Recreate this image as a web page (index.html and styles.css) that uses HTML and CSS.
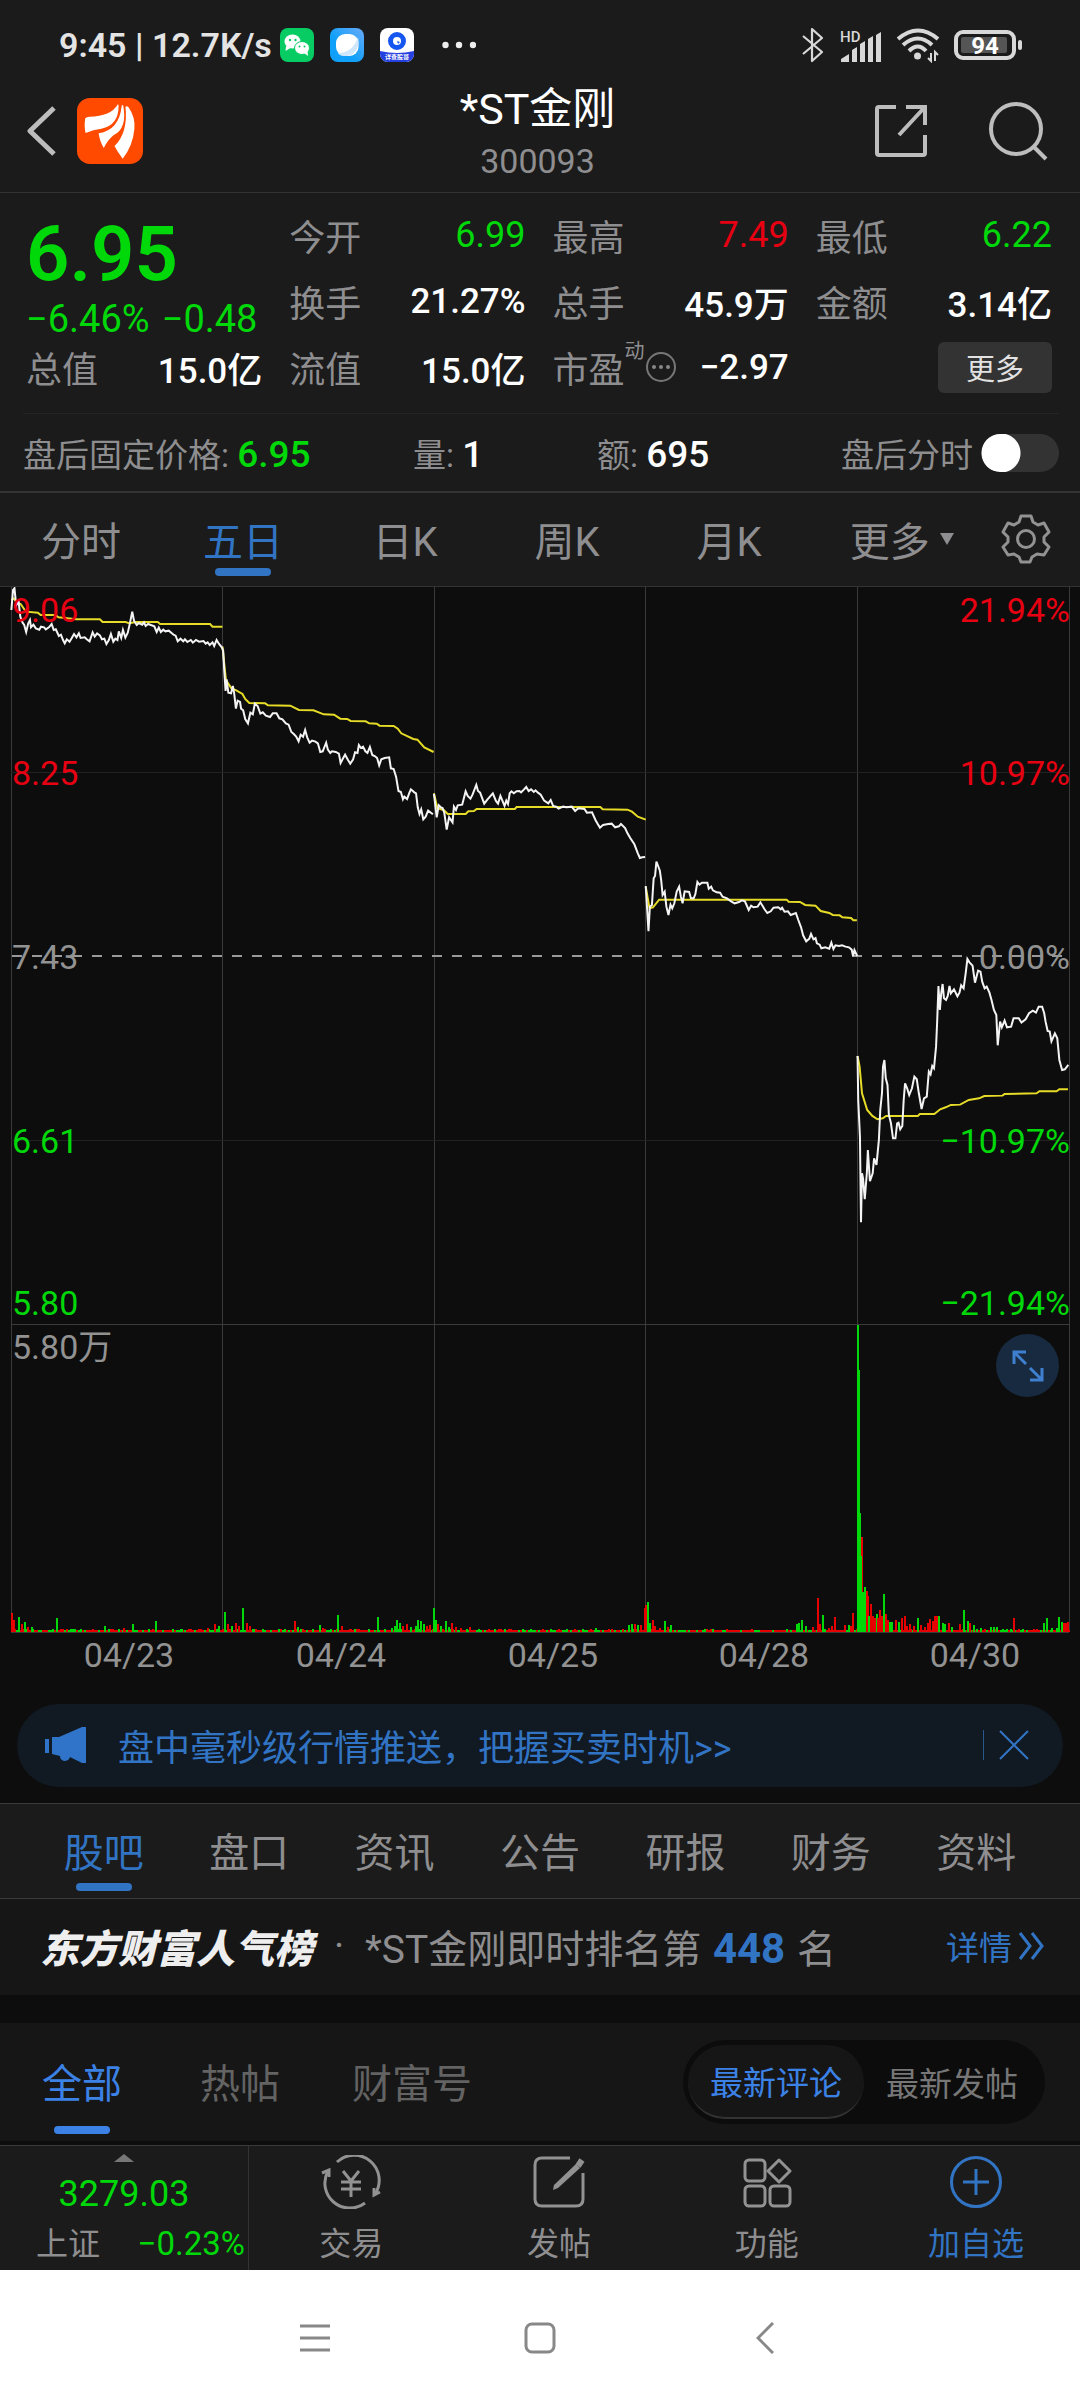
FILE: index.html
```html
<!DOCTYPE html>
<html lang="zh-CN">
<head>
<meta charset="utf-8">
<meta name="viewport" content="width=device-width, initial-scale=1">
<title>*ST金刚 300093</title>
<link rel="stylesheet" href="styles.css">
</head>
<body>
<div class="app">
  <div class="status">
    <span class="status-text">9:45 | 12.7K/s</span>
    <span class="status-apps">
      <svg width="34" height="34" viewBox="0 0 34 34"><rect width="34" height="34" rx="8" fill="#07cc63"/><g fill="#fff"><ellipse cx="12.500" cy="13.500" rx="8" ry="7"/><path d="M6 18l-.5 5 5-3z"/><g stroke="#07cc63"><ellipse cx="22" cy="20" rx="7.500" ry="6.500"/></g><path d="M24 25l4 3-.5-5z"/></g><g fill="#07cc63"><circle cx="10" cy="12" r="1.200"/><circle cx="15.500" cy="12" r="1.200"/><circle cx="19.500" cy="18.500" r="1"/><circle cx="24.500" cy="18.500" r="1"/></g></svg>
      <svg width="34" height="34" viewBox="0 0 34 34"><defs><linearGradient id="sky" x1="1" y1="0" x2="0" y2="1"><stop offset=".1" stop-color="#5aa8f8"/><stop offset=".6" stop-color="#10a0fa"/></linearGradient></defs><rect width="34" height="34" rx="8" fill="url(#sky)"/><rect x="6" y="6" width="22.500" height="22" rx="9" fill="#fff"/><path d="M28 9c2 9-2 19-13 19-4 0-6-1-7-3 10 0 17-6 20-16z" fill="#cfe6fb"/></svg>
      <svg width="34" height="34" viewBox="0 0 34 34"><defs><clipPath id="round"><rect width="34" height="34" rx="8"/></clipPath></defs><g clip-path="url(#round)"><rect width="34" height="34" fill="#fff"/><path d="M0 23q17 4 34 0v11H0z" fill="#2740e0"/></g><circle cx="17" cy="13" r="6.500" fill="none" stroke="#1656f0" stroke-width="5"/><path d="M17 13l3 1-2 2z" fill="#1656f0"/><text x="17" y="31" class="app-label">详查股哥</text></svg>
    </span>
    <svg class="status-dots" width="34" height="8" viewBox="0 0 34 8" fill="#eee"><circle cx="3.500" cy="4" r="3.200"/><circle cx="17" cy="4" r="3.200"/><circle cx="31" cy="4" r="3.200"/></svg>
    <span class="status-right">
      <svg width="22" height="36" viewBox="0 0 22 36" fill="none" stroke="#d8d8d8" stroke-width="2.200" stroke-linejoin="round"><path d="M1 9l19 16-10 9V2l10 9L1 27"/></svg>
      <svg width="44" height="38" viewBox="-2 -4 44 38" fill="#d8d8d8"><text x="0" y="12" class="hd">HD</text><path d="M1 32v-3l8-5v8zM12 32V20l5-3v15zM20 32V14l5-3v21zM28 32V9l5-3v26zM36 32V5l5-3v30z"/></svg>
      <svg width="44" height="36" viewBox="0 0 44 36" fill="none" stroke="#d8d8d8" stroke-width="4"><path d="M2 12Q22-5 42 12M7 18Q22 5 36 18M13 24Q22 15 30 24"/><circle cx="21.500" cy="29" r="3.500" fill="#d8d8d8" stroke="none"/><path d="M35 26v8l-3-3M39 34v-9l3 3" stroke-width="2"/></svg>
      <svg width="70" height="32" viewBox="0 0 70 32"><rect x="2" y="3" width="58" height="26" rx="7" fill="none" stroke="#d8d8d8" stroke-width="4"/><rect x="7" y="8" width="46" height="16" rx="2" fill="#555"/><rect x="64" y="11" width="4" height="10" rx="2" fill="#d8d8d8"/><text x="31" y="25" class="battery">94</text></svg>
    </span>
  </div>

  <header class="header">
    <div class="header-side">
      <button class="icon-button" aria-label="返回"><svg width="30" height="50" viewBox="0 0 30 50" fill="none" stroke="#bdbdbd" stroke-width="5" stroke-linejoin="round"><path d="M27 2L3 25l24 23"/></svg></button>
      <svg class="brand" viewBox="225 294 192 198" preserveAspectRatio="none"><rect x="225" y="294" width="192" height="198" rx="38" fill="#ff4a00"/><g fill="#fff"><path d="M249 355q4-5 12-5 62 0 83-37 2 0 2 5 0 58-50 68-24 3-46 13-5-20-1-44z"/><path d="M288 400q60-10 67-83l4-3q14 70-28 92-18 16-28 38-12-20-15-44z"/><path d="M334 438q40-40 32-118 4-4 9 2 20 30 17 64-4 50-34 90-14-18-24-38z"/></g></svg>
    </div>
    <div class="header-title"><h1>*ST金刚</h1><p>300093</p></div>
    <div class="header-side header-actions">
      <button class="icon-button" aria-label="分享"><svg width="54" height="54" viewBox="0 0 54 54" fill="none" stroke="#bdbdbd" stroke-width="4"><path d="M22 3H5q-2 0-2 2v44q0 2 2 2h44q2 0 2-2V31M32 3h19v18M50 4L25 31"/></svg></button>
      <button class="icon-button" aria-label="搜索"><svg width="60" height="60" viewBox="0 0 60 60" fill="none" stroke="#bdbdbd" stroke-width="4"><circle cx="28" cy="28" r="25"/><path d="M45 45l13 13"/></svg></button>
    </div>
  </header>

  <section class="quote">
    <div class="quote-grid">
      <div class="price down"><strong>6.95</strong><div class="change"><span>−6.46%</span><span>−0.48</span></div></div>
      <div class="stat"><span>今开</span><b class="down">6.99</b></div>
      <div class="stat"><span>最高</span><b class="up">7.49</b></div>
      <div class="stat"><span>最低</span><b class="down">6.22</b></div>
      <div class="stat"><span>换手</span><b>21.27%</b></div>
      <div class="stat"><span>总手</span><b>45.9万</b></div>
      <div class="stat"><span>金额</span><b>3.14亿</b></div>
      <div class="stat"><span>总值</span><b>15.0亿</b></div>
      <div class="stat"><span>流值</span><b>15.0亿</b></div>
      <div class="stat"><span class="pe">市盈<sup>动</sup><svg width="32" height="32" viewBox="0 0 32 32"><circle cx="16" cy="16" r="14" fill="none" stroke="#777" stroke-width="2"/><g fill="#888"><circle cx="9" cy="16" r="2"/><circle cx="16" cy="16" r="2"/><circle cx="23" cy="16" r="2"/></g></svg></span><b>−2.97</b></div>
      <div class="stat stat-more"><button class="more">更多</button></div>
    </div>
    <div class="after">
      <span>盘后固定价格: <b class="down">6.95</b></span>
      <span>量: <b>1</b></span>
      <span>额: <b>695</b></span>
      <label class="switch">盘后分时<input type="checkbox"></label>
    </div>
  </section>

  <nav class="periods">
    <button>分时</button>
    <button class="active">五日</button>
    <button>日K</button>
    <button>周K</button>
    <button>月K</button>
    <button class="period-more">更多<svg width="14" height="12" viewBox="0 0 14 12"><path d="M0 0h14L7 12z" fill="#8e8e90"/></svg></button>
    <button class="gear" aria-label="设置"><svg width="50" height="50" viewBox="0 0 50 50" fill="none" stroke="#929292" stroke-width="3" stroke-linejoin="round"><path d="M20 2h10l2 6 5 3 6-2 5 9-5 5v5l5 5-5 8-7-1-5 3-2 5H20l-2-5-5-3-6 1-5-8 5-5v-5l-5-5 5-9 6 2 5-3z"/><circle cx="25" cy="25" r="8.500"/></svg></button>
  </nav>

  <main class="chart">
    <svg class="plot" viewBox="0 0 1080 1100" role="img" aria-label="五日走势">
      <g class="grid">
        <path d="M11.500 0V1045M222.500 0V1045M434.500 0V1045M645.500 0V1045M857.500 0V1045M1069.500 0V1045M11 737.500H1069M11 1045.500H1069"/>
        <path class="faint" d="M11 185.500H1069M11 553.500H1069"/>
      </g>
      <path class="zero" d="M12 369H1069"/>
      <g class="lines" transform="translate(0 -7) scale(.3444 .3333)">
        <polyline class="average" points="33,60 40,55 50,68 60,72 75,95 110,98 118,105 160,105 170,112 222,118 290,118 298,126 365,126 375,130 395,126 458,126 465,132 610,132 617,140 646,140"/>
        <polyline class="average" points="646,200 656,300 672,325 686,331 704,342 712,357 724,369 770,370 778,376 843,377 868,390 910,391 940,403 970,404 988,416 1008,417 1018,423 1062,424 1072,430 1094,431 1102,437 1143,438 1155,446 1165,460 1200,477 1212,479 1232,502 1259,516"/>
        <polyline class="average" points="1260,640 1270,685 1288,690 1300,702 1352,702 1360,694 1376,693 1384,687 1495,687 1500,681 1568,681 1743,681 1750,688 1822,689 1835,695 1852,710 1875,719"/>
        <polyline class="price-line" points="33,90 38,30 42,25 47,76 54,64 59,110 66,129 70,134 76,156 82,130 87,120 90,142 97,134 104,145 114,149 119,140 128,142 133,148 142,142 150,132 156,150 162,148 171,168 177,164 183,180 188,190 194,178 202,185 208,175 215,162 222,172 229,160 234,174 246,172 251,177 260,184 269,157 275,170 282,160 290,166 296,178 303,176 309,192 316,180 322,162 329,185 335,176 341,180 345,154 352,174 357,150 364,173 371,158 377,131 384,95 389,122 397,135 403,129 413,134 418,127 423,138 430,132 438,135 448,139 455,156 461,143 467,156 474,149 480,154 490,152 505,165 510,167 516,184 524,176 532,184 537,178 544,186 554,180 560,188 569,180 578,185 591,183 597,191 603,187 609,195 617,187 622,198 629,180 636,192 644,202 648,212 651,270 655,333 658,298 663,338 671,340 676,318 680,340 685,386 690,362 697,366 700,386 706,391 712,417 720,430 727,398 734,403 740,371 748,378 756,401 763,397 772,407 784,411 792,400 803,400 811,415 820,418 830,430 838,434 846,456 853,462 860,470 867,484 873,464 880,470 886,450 892,472 899,488 906,482 916,485 923,490 930,516 937,514 947,488 952,509 959,519 964,514 975,516 984,521 989,549 995,537 1002,524 1010,539 1017,551 1025,539 1031,517 1038,519 1042,495 1048,504 1054,500 1061,514 1067,519 1074,501 1081,525 1089,529 1095,534 1101,556 1107,538 1117,534 1130,532 1135,565 1143,567 1150,590 1157,633 1164,636 1170,658 1174,650 1182,657 1188,640 1193,628 1203,637 1208,640 1213,682 1218,702 1223,688 1229,718 1236,710 1243,692 1257,703"/>
        <polyline class="price-line" points="1260,642 1268,712 1274,676 1280,682 1285,684 1290,698 1297,749 1304,712 1314,727 1318,680 1324,690 1329,676 1342,674 1348,650 1352,634 1358,648 1366,656 1372,644 1383,615 1388,633 1394,638 1406,671 1415,659 1431,640 1440,663 1446,671 1453,648 1459,663 1465,678 1470,662 1475,672 1480,640 1485,634 1492,640 1500,634 1508,633 1513,637 1521,629 1528,621 1535,633 1542,628 1550,636 1555,631 1562,638 1570,644 1580,662 1592,670 1599,660 1606,678 1615,680 1622,686 1635,680 1645,682 1660,680 1670,693 1679,685 1697,687 1704,698 1719,697 1729,720 1736,733 1742,743 1751,735 1766,732 1776,731 1786,742 1797,739 1803,732 1815,744 1822,760 1830,774 1842,793 1852,820 1858,834 1865,832 1873,831"/>
      </g>
      <g class="lines" transform="translate(540 153) scale(.3444 .3333)">
        <polyline class="average" points="307,440 318,505 328,502 346,479 716,479 722,485 755,486 770,495 800,497 815,513 840,519 850,525 870,526 878,532 903,534 910,541 920,541"/>
        <polyline class="average" points="922,948 928,980 935,1060 950,1110 965,1128 980,1138 995,1135 1005,1128 1097,1128 1103,1122 1145,1122 1162,1108 1178,1102 1193,1095 1220,1094 1245,1080 1275,1075 1290,1068 1343,1067 1349,1062 1442,1060 1450,1054 1500,1054 1508,1048 1533,1048"/>
        <polyline class="price-line" points="307,438 315,574 319,500 325,495 330,415 334,408 338,365 343,378 348,392 352,422 356,465 362,455 367,500 373,525 379,494 384,505 390,490 397,455 404,440 409,470 414,490 420,454 433,456 438,474 446,475 451,463 457,426 463,434 470,428 486,428 490,446 497,440 502,451 513,457 523,458 530,470 543,475 555,484 565,490 578,486 586,481 595,484 606,510 613,497 620,502 632,500 640,487 652,508 660,519 670,514 678,503 692,502 699,508 703,503 710,515 720,514 728,525 743,519 750,540 758,562 764,586 773,604 782,596 787,582 794,598 800,594 804,610 812,614 817,625 828,622 840,626 846,608 852,627 858,616 868,618 877,616 887,620 897,622 905,629 909,648 913,630 921,648"/>
        <polyline class="price-line" points="922,948 924,1080 929,1190 932,1447 935,1300 938,1315 943,1378 949,1300 952,1230 958,1324 966,1300 970,1255 977,1275 984,1200 988,1110 993,1060 996,980 1000,960 1004,1015 1009,1035 1013,1125 1019,1150 1025,1195 1032,1195 1037,1150 1041,1148 1046,1168 1052,1158 1056,1080 1060,1030 1066,1045 1072,1065 1080,1045 1087,1010 1094,1018 1100,1060 1108,1107 1115,1075 1123,1070 1129,995 1134,1003 1139,978 1144,985 1150,920 1153,850 1157,738 1161,810 1165,760 1169,732 1173,775 1179,780 1184,768 1189,738 1193,760 1202,748 1212,769 1218,758 1223,736 1230,745 1236,700 1241,657 1247,667 1256,677 1263,728 1272,692 1279,695 1284,725 1291,745 1297,740 1305,758 1311,780 1318,810 1325,825 1329,916 1333,875 1336,845 1341,862 1349,842 1356,862 1368,860 1375,835 1390,835 1398,848 1410,838 1420,820 1431,812 1440,818 1448,800 1458,800 1464,820 1468,845 1474,873 1480,875 1485,904 1495,880 1502,895 1508,960 1516,990 1524,988 1534,975"/>
      </g>
      <g id="volume"></g>
      <g class="scale">
        <g class="up"><text x="12" y="35">9.06</text><text x="12" y="198">8.25</text></g>
        <text x="12" y="382">7.43</text>
        <g class="down"><text x="12" y="566">6.61</text><text x="12" y="728">5.80</text></g>
        <text x="12" y="772">5.80万</text>
        <g class="right"><g class="up"><text x="1070" y="35">21.94%</text><text x="1070" y="198">10.97%</text></g>
        <text x="1070" y="382">0.00%</text>
        <g class="down"><text x="1070" y="566">−10.97%</text><text x="1070" y="728">−21.94%</text></g></g>
        <g class="dates"><text x="129" y="1080">04/23</text><text x="341" y="1080">04/24</text><text x="553" y="1080">04/25</text><text x="764" y="1080">04/28</text><text x="975" y="1080">04/30</text></g>
      </g>
    </svg>
    <button class="expand" aria-label="全屏"><svg width="32" height="32" viewBox="0 0 32 32" fill="none" stroke="#3e7fd0" stroke-width="3"><path d="M14 2H2v12M2 2l12 12M18 30h12V18M30 30L18 18"/></svg></button>
  </main>

  <aside class="promo">
    <svg width="44" height="38" viewBox="0 0 44 38" fill="#2f74c8"><path d="M1 13h4v14H1zM8 11h7L38 1h4v36h-4l-12-6q-1 4-6 4-4-1-4-5l-8-2z"/></svg>
    <a href="#push">盘中毫秒级行情推送，把握买卖时机&gt;&gt;</a>
    <button aria-label="关闭"><svg width="30" height="30" viewBox="0 0 30 30" fill="none" stroke="#3274c4" stroke-width="2"><path d="M1 1l28 28M29 1L1 29"/></svg></button>
  </aside>

  <nav class="sections">
    <button class="active">股吧</button>
    <button>盘口</button>
    <button>资讯</button>
    <button>公告</button>
    <button>研报</button>
    <button>财务</button>
    <button>资料</button>
  </nav>

  <div class="rank">
    <strong class="rank-brand">东方财富人气榜</strong>
    <span class="rank-dot">·</span>
    <span class="rank-text">*ST金刚即时排名第 <b>448</b> 名</span>
    <a href="#rank">详情<svg width="26" height="28" viewBox="0 0 26 28" fill="none" stroke="#3274c4" stroke-width="3"><path d="M2 1l10 13L2 27M14 1l10 13-10 13"/></svg></a>
  </div>

  <div class="posts">
    <button class="active">全部</button>
    <button>热帖</button>
    <button>财富号</button>
    <div class="sort"><button class="selected">最新评论</button><button>最新发帖</button></div>
  </div>

  <footer class="bottom">
    <div class="index">
      <svg width="20" height="8" viewBox="0 0 20 8"><path d="M0 8L10 0l10 8z" fill="#777"/></svg>
      <b class="down">3279.03</b>
      <div><span>上证</span><span class="down">−0.23%</span></div>
    </div>
    <button><svg width="60" height="54" viewBox="0 0 60 54" fill="none" stroke="#929292" stroke-width="3"><path d="M16 7A25 25 0 0 1 54 39M44 48A25 25 0 0 1 7 16"/><path d="M1 18l7-3v7M59 37l-6 3v-7M22 16l8 10 8-10M30 26v16M20 27h20M20 34h20"/></svg>交易</button>
    <button><svg width="54" height="54" viewBox="0 0 54 54" fill="none" stroke="#929292" stroke-width="3"><path d="M38 3H10q-7 0-7 7v34q0 7 7 7h34q7 0 7-7V18"/><path d="M46 11L50 5" stroke-width="6"/><path d="M44 9l4 4-22 20-5 2 1-5z" fill="#929292" stroke="none"/></svg>发帖</button>
    <button><svg width="50" height="54" viewBox="0 0 50 54" fill="none" stroke="#929292" stroke-width="3"><rect x="3" y="5" width="20" height="21" rx="4"/><rect x="3" y="31" width="20" height="20" rx="4"/><rect x="28" y="31" width="20" height="20" rx="4"/><path d="M37 5l11 11-11 11-11-11z" stroke-linejoin="round"/></svg>功能</button>
    <button class="add"><svg width="54" height="54" viewBox="0 0 54 54" fill="none" stroke="#3274c4" stroke-width="3"><circle cx="27" cy="27" r="24.500"/><path d="M27 14v26M14 27h26"/></svg>加自选</button>
  </footer>
</div>
<nav class="system">
  <button aria-label="最近任务"><svg width="30" height="32" viewBox="0 0 30 32" stroke="#888" stroke-width="3"><path d="M0 4h30M0 16h30M0 28h30"/></svg></button>
  <button aria-label="主页"><svg width="32" height="32" viewBox="0 0 32 32" fill="none" stroke="#888" stroke-width="3"><rect x="2" y="2" width="28" height="28" rx="6"/></svg></button>
  <button aria-label="返回"><svg width="18" height="32" viewBox="0 0 18 32" fill="none" stroke="#888" stroke-width="3"><path d="M17 1L2 16l15 15"/></svg></button>
</nav>
<script src="volume.js"></script>
</body>
</html>
```
FILE: volume.js
```js
// Volume bars: x position, height and direction (g = down, r = up).
const peaks = "12,19r 14,12r 19,15g 22,8r 25,10g 28,5r 32,5g 57,14g 63,3r 105,6g 124,4r 133,8g 156,11g 182,3g 208,4r 215,8r 219,6g 225,20g 228,8r 232,6g 236,9r 239,6r 243,24g 247,9r 250,6r 256,3r 279,3g 295,11r 298,5g 320,7g 323,4r 338,17g 342,6r 350,3r 378,15g 392,4g 395,6g 397,12g 400,9g 403,6r 407,8r 411,5g 416,6g 418,12g 421,11g 424,8g 427,6r 430,7r 434,24g 436,12g 438,8r 441,6g 446,11g 449,5g 452,9r 456,5r 461,4r 470,5r 479,3g 596,4g 612,3r 629,7g 632,8g 635,8r 638,7g 641,7r 645,24r 646,27r 648,30g 650,9g 653,12r 655,6r 660,4r 665,11g 668,5r 671,7g 727,3r 752,3r 797,8g 799,9g 802,12g 806,6g 813,5r 818,34r 820,8r 823,17g 829,4r 832,6r 835,15r 845,7r 849,7g 851,6r 853,19r 862,95r 863,40g 865,45g 867,41r 868,36r 869,16g 871,28r 873,16r 875,14r 877,18g 878,14r 880,22r 882,16r 884,38g 886,18r 888,12r 890,10g 892,10g 896,12r 899,10g 902,14r 905,16r 907,6r 910,8r 914,6r 918,14g 921,7r 925,5r 928,9r 930,13r 933,11r 935,16r 937,16r 939,16g 943,9g 945,8g 949,9r 952,5g 960,8r 964,22g 968,11g 970,9r 974,7g 981,4g 991,5g 994,5g 997,5g 1014,14r 1034,3r 1044,9g 1047,14g 1052,4g 1057,4g 1059,15g 1062,10g 1064,9r 1066,9r 1068,10r";
const base = 1045;
const bar = (x, height, kind) =>
  `<rect class="${kind === "g" ? "bar-down" : "bar-up"}" x="${x}" y="${base - height}" width="2" height="${height}"/>`;

let markup = "";
for (let x = 12; x < 1069; x += 2) {
  const seed = (x * 37 + (x * x) % 91) % 17;
  markup += bar(x, seed % 5 === 0 ? 3 : 2, seed % 3 === 0 ? "g" : "r");
}
for (const peak of peaks.split(" ")) {
  const [x, value] = peak.split(",");
  markup += bar(Number(x) - 1, parseInt(value, 10), value.slice(-1));
}
markup += bar(857, 307, "g") + bar(858, 262, "g") + bar(859, 119, "g") + bar(860, 76, "g");
document.getElementById("volume").innerHTML = markup;
```
FILE: styles.css
```css
* { box-sizing: border-box; }
body {
  margin: 0;
  background: #fff;
  color: #8e8e90;
  font-family: Roboto, "Noto Sans CJK SC", sans-serif;
  font-size: 36px;
}
button {
  border: 0;
  padding: 0;
  background: none;
  color: inherit;
  font: inherit;
  white-space: nowrap;
}
a { color: #3274c4; text-decoration: none; }
svg { display: block; flex: none; }
h1, p { margin: 0; }
.app { background: #0d0d0d; }
.up { color: #e60012; fill: #e60012; }
.down { color: #00d80a; fill: #00d80a; }

.status {
  display: flex;
  align-items: center;
  height: 90px;
  padding: 0 56px 0 59px;
  background: #1b1b1b;
  color: #e4e4e4;
}
.status-text { font-size: 34px; font-weight: 600; white-space: nowrap; }
.status-apps { display: flex; gap: 16px; margin-left: 8px; }
.app-label { fill: #fff; font-size: 6px; font-weight: 700; text-anchor: middle; }
.status-dots { margin-left: 28px; }
.status-right { display: flex; align-items: center; gap: 14px; margin-left: auto; }
.hd { font-size: 15px; font-weight: 500; }
.battery { fill: #fff; font-size: 24px; font-weight: 700; text-anchor: middle; }

.header {
  display: grid;
  grid-template-columns: 1fr auto 1fr;
  align-items: start;
  height: 103px;
  padding: 0 32px 0 27px;
  background: #1b1b1b;
  border-bottom: 1px solid #333;
}
.header-side { display: flex; align-items: center; gap: 20px; height: 82px; }
.header-actions { justify-content: flex-end; gap: 60px; }
.brand { width: 66px; height: 66px; }
.header-title { margin-top: -8px; text-align: center; }
.header-title h1 { color: #fff; font-size: 43px; font-weight: 400; line-height: 54px; }
.header-title p { font-size: 34px; line-height: 50px; }

.quote { background: #1b1b1b; border-bottom: 2px solid #333; }
.quote-grid {
  display: grid;
  grid-template-columns: repeat(4, 1fr);
  grid-auto-rows: 66px;
  column-gap: 27px;
  margin: 0 28px 0 26px;
  padding: 9px 0 13px;
}
.price { grid-row: span 2; display: flex; flex-direction: column; white-space: nowrap; }
.price strong { font-size: 76px; font-weight: 600; line-height: 84px; padding-top: 10px; }
.change { display: flex; gap: 12px; font-size: 38px; line-height: 46px; }
.stat { display: flex; align-items: center; justify-content: space-between; white-space: nowrap; }
.stat b { color: #fff; font-size: 35px; font-weight: 500; }
.stat b.up { color: #e60012; font-size: 36px; font-weight: 400; }
.stat b.down { color: #00d80a; font-size: 36px; font-weight: 400; }
.pe { display: flex; align-items: center; }
.pe sup { align-self: flex-start; font-size: 20px; line-height: 20px; }
.stat-more { justify-content: flex-end; }
.more { width: 114px; height: 51px; border-radius: 6px; background: #333; color: #e2e2e2; font-size: 29px; }
.after {
  display: grid;
  grid-template-columns: 390fr 184fr 244fr 218fr;
  align-items: center;
  height: 78px;
  margin: 0 21px 0 23px;
  border-top: 1px solid #252525;
  font-size: 33px;
  white-space: nowrap;
}
.after b { font-size: 37px; font-weight: 500; }
.after b:not(.down) { color: #fff; }
.switch { display: flex; align-items: center; justify-content: space-between; }
.switch input {
  appearance: none;
  width: 78px;
  height: 38px;
  margin: 0;
  border-radius: 19px;
  background: radial-gradient(circle at 20px 19px, #fff 19px, transparent 20px), #333;
}

.periods { display: flex; height: 94px; background: #1b1b1b; border-bottom: 1px solid #333; font-size: 40px; }
.periods button { flex: 0 0 15%; padding-bottom: 2px; }
.periods .active, .sections .active, .posts .active { position: relative; color: #3274c4; }
.active::after {
  content: "";
  position: absolute;
  left: 50%;
  bottom: 10px;
  width: 56px;
  height: 8px;
  margin-left: -28px;
  border-radius: 4px;
  background: #3274c4;
}
.periods .period-more { display: flex; flex-basis: 17%; align-items: center; justify-content: center; gap: 10px; }
.periods .gear { display: flex; flex: 1; align-items: center; justify-content: center; padding-right: 22px; }

.chart { position: relative; }
.plot { width: 100%; height: auto; }
.grid path { fill: none; stroke: #3a3a3a; }
.grid .faint { stroke: #222; }
.zero { stroke: #999; stroke-width: 2; stroke-dasharray: 10 10; }
.lines polyline { fill: none; stroke-width: 2; vector-effect: non-scaling-stroke; }
.lines .average { stroke: #e6dc28; }
.lines .price-line { stroke: #f4f4f4; }
.bar-up { fill: #e60000; }
.bar-down { fill: #00d80a; }
.scale { fill: #929292; font-size: 34px; }
.right { text-anchor: end; }
.dates { text-anchor: middle; }
.expand {
  position: absolute;
  top: 747px;
  right: 21px;
  display: grid;
  place-items: center;
  width: 63px;
  height: 63px;
  border-radius: 50%;
  background: #182a3f;
}

.promo {
  display: flex;
  align-items: center;
  height: 83px;
  margin: 17px 17px 16px;
  padding: 0 34px 2px 27px;
  border-radius: 42px;
  background: #111922;
}
.promo a { flex: 1; padding-left: 30px; white-space: nowrap; }
.promo button { padding-left: 15px; border-left: 1px solid #29588f; }

.sections {
  display: flex;
  height: 96px;
  padding: 0 31px;
  background: #1b1b1b;
  border-top: 1px solid #3a3a3a;
  border-bottom: 1px solid #3a3a3a;
  font-size: 40px;
}
.sections button { flex: 1; padding-bottom: 2px; }
.sections .active::after { bottom: 7px; }

.rank {
  display: flex;
  align-items: center;
  height: 96px;
  margin-bottom: 28px;
  padding: 0 36px 2px 40px;
  background: #161616;
  font-size: 39px;
  white-space: nowrap;
}
.rank-brand { color: #eee; font-style: italic; font-weight: 900; }
.rank-dot { width: 52px; text-align: center; }
.rank-text b { padding: 0 2px; color: #3274c4; font-size: 42px; }
.rank a { display: flex; align-items: center; gap: 6px; margin-left: auto; font-size: 33px; }

.posts {
  display: flex;
  align-items: stretch;
  height: 118px;
  margin-bottom: 4px;
  padding: 0 35px 0 42px;
  background: #161616;
  color: #636363;
  font-size: 40px;
}
.posts > button { margin-right: 78px; padding-bottom: 2px; }
.posts > button + button { margin-right: 72px; }
.posts .active { color: #3c82e6; }
.posts .active::after { bottom: 7px; background: #3c82e6; }
.sort {
  display: flex;
  align-self: center;
  height: 84px;
  margin-left: auto;
  padding: 5px;
  border-radius: 42px;
  background: #0c0c0c;
  color: #777;
  font-size: 33px;
}
.sort button { width: 176px; border-radius: 37px; }
.sort .selected { background: #161616; border-bottom: 2px solid #333; color: #3c82e6; }

.bottom {
  display: grid;
  grid-template-columns: 249px repeat(4, 1fr);
  height: 125px;
  background: #1b1b1b;
  border-top: 1px solid #3a3a3a;
  font-size: 32px;
}
.bottom button { display: flex; flex-direction: column; align-items: center; padding: 9px 3px 0 0; line-height: 46px; gap: 12px; }
.bottom .add { padding-right: 0; color: #3274c4; }
.index { display: flex; flex-direction: column; align-items: center; padding-top: 8px; border-right: 1px solid #333; }
.index b { font-size: 36px; font-weight: 400; line-height: 64px; }
.index div { display: flex; align-self: stretch; justify-content: space-between; padding: 0 3px 0 36px; line-height: 36px; }
.index .down { white-space: nowrap; }
.index div .down { font-size: 33px; }

.system { display: flex; align-items: center; height: 130px; padding: 6px 203px 0; }
.system button { display: grid; flex: 1; justify-items: center; }
```
